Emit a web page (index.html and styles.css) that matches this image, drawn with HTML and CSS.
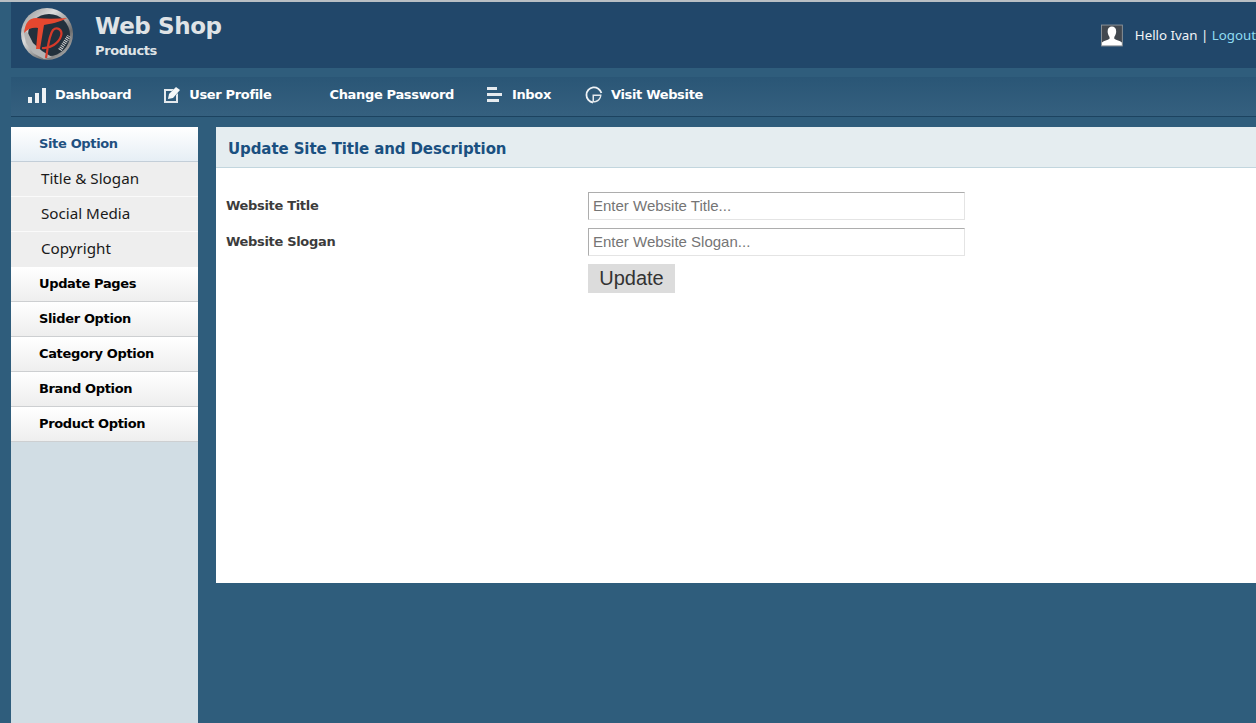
FILE: index.html
```html
<!DOCTYPE html>
<html>
<head>
  <meta charset="UTF-8">
  <meta name="viewport" content="width=device-width, initial-scale=1.0">
  <title>Web Shop - Products</title>
  <link rel="stylesheet" href="styles.css">
</head>
<body>
  <div class="page">
    <header class="header">
      <div class="brand">
        <svg class="logo" width="54" height="54" viewBox="0 0 54 54">
          <defs>
            <linearGradient id="ring" x1="0" y1="0" x2="1" y2="1">
              <stop offset="0" stop-color="#8b8b8b"/>
              <stop offset="0.35" stop-color="#dcdcdc"/>
              <stop offset="0.7" stop-color="#6f6f6f"/>
              <stop offset="1" stop-color="#c9c9c9"/>
            </linearGradient>
          </defs>
          <circle cx="27" cy="27" r="26" fill="url(#ring)"/>
          <circle cx="29" cy="28" r="21" fill="#22303c"/>
          <path d="M3 22 L6 36 L13 46 L24 52 L32 50 L22 44 L13 36 L8 26 Z" fill="#b4b4b4"/>
          <path d="M4 26 C5 16 9 11 16 11 C26 12 36 12 47 11 C40 15 30 17 24 18 L20 42 L16 42 L18 21 C14 20 8 21 4 26 Z" fill="#e4472f"/>
          <path d="M26 51 C28 40 29 28 33 23 C37 19 43 23 41 29 C39 36 30 42 22 41" fill="none" stroke="#d63a2a" stroke-width="2.200"/>
          <path d="M40 43 L49 29" stroke="#d5d5d5" stroke-width="4" stroke-dasharray="1 1" fill="none"/>
        </svg>
        <div class="brand-text">
          <h1>Web Shop</h1>
          <p>Products</p>
        </div>
      </div>
      <div class="user">
        <svg class="avatar" width="23" height="23" viewBox="0 0 23 23">
          <rect x="0.5" y="0.5" width="22" height="22" fill="#42484f" stroke="#8d9398"/>
          <path d="M1 22 L1 19 C3 17 7 16.5 9 15 L9 13 C7.500 11 7 9 7 7 C7 3.500 9 2 11.500 2 C14 2 16 3.500 16 7 C16 9 15.500 11 14 13 L14 15 C16 16.500 20 17 22 19 L22 22 Z" fill="#fff"/>
        </svg>
        <span class="hello">Hello Ivan | <a href="#">Logout</a></span>
      </div>
    </header>

    <nav class="nav">
      <a href="#">
        <span class="nav-icon first">
          <svg width="20" height="18" viewBox="0 0 20 18"><path d="M1 11h4v6H1zM8 7h4v10H8zM15 2h4v15h-4z" fill="#eef2f5"/></svg>
        </span>Dashboard
      </a>
      <a href="#">
        <span class="nav-icon">
          <svg width="18" height="18" viewBox="0 0 18 18"><path d="M1 3h10L9 5H3v10h10V9l2-2v10H1z" fill="#e4e9ed"/><path d="M5 13l1-5 7-7 4 3-7 8z" fill="#f5f7f8"/></svg>
        </span>User Profile
      </a>
      <a href="#"><span class="nav-icon"></span>Change Password</a>
      <a href="#">
        <span class="nav-icon">
          <svg width="17" height="18" viewBox="0 0 17 18"><path d="M1 1h10v3H1zM1 7h15v3H1zM1 13h12v3H1z" fill="#e6ebef"/></svg>
        </span>Inbox
      </a>
      <a href="#" class="visit">
        <span class="nav-icon">
          <svg width="18" height="18" viewBox="0 0 18 18"><path d="M16.400 7A7.600 7.600 0 1 0 8 16.500" fill="none" stroke="#eef2f5" stroke-width="1.800"/><path d="M7.500 8.500h9c0 4-3 8-7 8h-2z" fill="#e4e9ed"/><path d="M9 10h6c-.5 2.500-3 5-6 5z" fill="#35607f"/></svg>
        </span>Visit Website
      </a>
    </nav>

    <div class="main">
      <aside class="sidebar">
        <ul>
          <li class="group current"><a href="#">Site Option</a></li>
          <li class="sub"><a href="#">Title &amp; Slogan</a></li>
          <li class="sub"><a href="#">Social Media</a></li>
          <li class="sub"><a href="#">Copyright</a></li>
          <li class="group"><a href="#">Update Pages</a></li>
          <li class="group"><a href="#">Slider Option</a></li>
          <li class="group"><a href="#">Category Option</a></li>
          <li class="group"><a href="#">Brand Option</a></li>
          <li class="group"><a href="#">Product Option</a></li>
        </ul>
      </aside>

      <section class="content">
        <h2>Update Site Title and Description</h2>
        <form class="form">
          <label for="title">Website Title</label>
          <input type="text" id="title" placeholder="Enter Website Title...">
          <label for="slogan">Website Slogan</label>
          <input type="text" id="slogan" placeholder="Enter Website Slogan...">
          <button type="button">Update</button>
        </form>
      </section>
    </div>
  </div>
</body>
</html>
```

FILE: styles.css
```css
html, body {
  margin: 0;
  padding: 0;
  height: 100%;
}

body {
  background: #2f5d7c;
  font-family: "DejaVu Sans", sans-serif;
  overflow: hidden;
}

.page {
  border-top: 2px solid #b9bfc4;
  padding-left: 11px;
  height: 721px;
  display: flex;
  flex-direction: column;
}

a {
  text-decoration: none;
}

.header {
  height: 66px;
  background: #21476a;
  display: flex;
  justify-content: space-between;
  align-items: center;
  flex-shrink: 0;
}

.brand {
  display: flex;
  align-items: center;
  padding-left: 9px;
}

.logo {
  margin-top: -2px;
}

.brand-text {
  margin-left: 21px;
  padding-top: 2px;
  color: #dfe3e6;
}

.brand-text h1 {
  margin: -2px 0 0;
  font-size: 23px;
  line-height: 28px;
  font-weight: bold;
  letter-spacing: -0.4px;
}

.brand-text p {
  margin: 3px 0 0;
  font-size: 13px;
  line-height: 16px;
  font-weight: bold;
  letter-spacing: -0.4px;
}

.user {
  display: flex;
  align-items: center;
  white-space: nowrap;
  width: 155px;
}

.hello {
  margin-left: 12px;
  font-family: "Noto Sans", sans-serif;
  font-size: 13.300px;
  color: #f1f4f6;
}

.hello a {
  color: #8fdcf2;
}

.nav {
  margin-top: 9px;
  height: 35px;
  padding: 0 0 4px 18px;
  background: linear-gradient(to bottom, #2a5676, #35607f);
  border-bottom: 1px solid #1c4360;
  display: flex;
  align-items: center;
  gap: 32px;
  flex-shrink: 0;
}

.nav a {
  display: flex;
  align-items: center;
  color: #fff;
  font-size: 13px;
  font-weight: bold;
  letter-spacing: -0.34px;
  white-space: nowrap;
}

.nav .visit {
  margin-left: 2px;
}

.nav-icon {
  width: 26px;
  height: 18px;
  display: flex;
}

.nav-icon svg {
  flex-shrink: 0;
}

.nav-icon.first svg {
  margin-left: -2px;
}

.main {
  margin-top: 10px;
  display: flex;
  flex: 1;
  gap: 18px;
  align-items: flex-start;
}

.sidebar {
  width: 187px;
  background: #d1dde4;
  align-self: stretch;
  flex-shrink: 0;
}

.sidebar ul {
  list-style: none;
  margin: 0;
  padding: 0;
}

.sidebar li {
  height: 35px;
  box-sizing: border-box;
  display: flex;
  align-items: center;
}

.group {
  background: linear-gradient(to bottom, #ffffff, #eeeeee);
  border-bottom: 1px solid #cdcfd1;
  padding: 0 0 1px 28px;
  font-size: 13px;
  font-weight: bold;
  letter-spacing: -0.35px;
}

.group a {
  color: #000;
}

.group.current {
  background: linear-gradient(to bottom, #ffffff, #e6eef5);
  border-bottom-color: #c3ced8;
}

.group.current a {
  color: #1f5080;
}

.sub {
  background: #eeeeee;
  border-bottom: 1px solid #fafafa;
  padding: 0 0 2px 30px;
  font-family: "Noto Sans", sans-serif;
  font-size: 15.200px;
}

.sub:nth-child(4) {
  border-bottom-color: #eeeeee;
}

.sub a {
  color: #1a1a1a;
}

.content {
  flex: 1;
  height: 456px;
  background: #fff;
  border-top-left-radius: 5px;
}

.content h2 {
  margin: 0;
  height: 41px;
  box-sizing: border-box;
  padding: 3px 0 0 12px;
  display: flex;
  align-items: center;
  background: #e5edf0;
  border-bottom: 1px solid #c2d6de;
  color: #1a5080;
  font-size: 15px;
  font-weight: bold;
  letter-spacing: -0.1px;
}

.form {
  display: grid;
  grid-template-columns: 362px 377px;
  row-gap: 8px;
  padding: 24px 0 0 10px;
  align-items: center;
}

.form label {
  color: #3c3c3c;
  font-size: 13px;
  font-weight: bold;
  letter-spacing: -0.32px;
  margin-top: -1px;
}

.form input {
  height: 28px;
  box-sizing: border-box;
  border: 1px solid #e4e4e4;
  border-top-color: #adadad;
  border-left-color: #adadad;
  padding: 0 4px 2px;
  font-family: "Liberation Sans", sans-serif;
  font-size: 15px;
  outline: none;
}

.form input::placeholder {
  color: #757575;
}

.form button {
  grid-column: 2;
  justify-self: start;
  width: 87px;
  height: 29px;
  border: none;
  padding: 0;
  background: #dcdcdc;
  color: #333;
  font-family: "Liberation Sans", sans-serif;
  font-size: 20px;
}
```
